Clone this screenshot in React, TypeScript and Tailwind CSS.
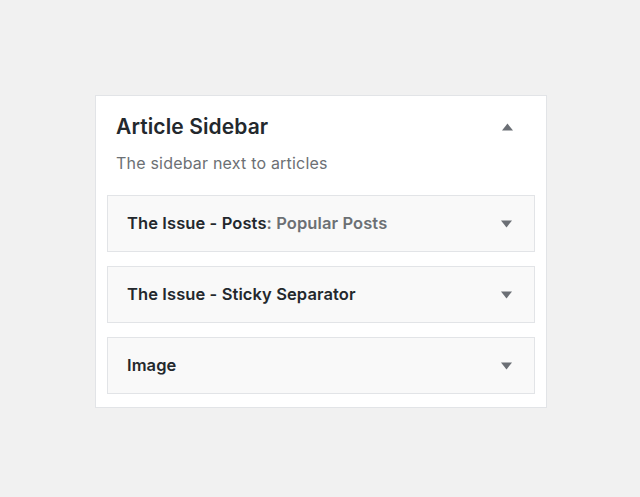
import React from "react";

const Down = () => (
  <svg width="11" height="8" viewBox="0 0 11 8" className="shrink-0">
    <path d="M0 0.5 L11 0.5 L5.5 7.5 Z" fill="#6b6f75" />
  </svg>
);
const Up = () => (
  <svg width="11" height="8" viewBox="0 0 11 8" className="shrink-0">
    <path d="M0 7.5 L11 7.5 L5.5 0.5 Z" fill="#6b6f75" />
  </svg>
);

function Item({ title, sub }: { title: string; sub?: string }) {
  return (
    <div className="h-[57px] border border-[#e2e4e7] bg-[#f9f9f9] flex items-center pl-[19px] pr-[22px]">
      <div className="flex-1 text-[16.5px] font-semibold text-[#23282d] tracking-[0.1px]">
        {title}
        {sub && <span className="text-[#6c7074]">{sub}</span>}
      </div>
      <Down />
    </div>
  );
}

export default function App() {
  return (
    <div
      className="w-[640px] h-[497px] bg-[#f1f1f1] pt-[95px] pl-[95px]"
      style={{ fontFamily: "Inter, 'Noto Sans', sans-serif" }}
    >
      <div className="w-[452px] h-[313px] bg-white border border-[#e2e4e7] px-[11px] pb-[13px] flex flex-col">
        <div className="flex items-center pl-[9px] pr-[22px] pt-[16px] h-[46px]">
          <div className="flex-1 text-[21px] font-semibold text-[#23282d] tracking-[0.1px]">Article Sidebar</div>
          <Up />
        </div>
        <div className="pl-[9px] pt-[9px] text-[16px] text-[#6c7074] h-[53px] tracking-[0.2px]">The sidebar next to articles</div>
        <div className="flex flex-col gap-[14px]">
          <Item title="The Issue - Posts" sub=": Popular Posts" />
          <Item title="The Issue - Sticky Separator" />
          <Item title="Image" />
        </div>
      </div>
    </div>
  );
}
